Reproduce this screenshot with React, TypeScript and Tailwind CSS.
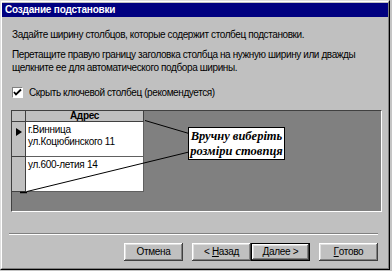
import React from "react";

const btnShadow =
  "shadow-[inset_-1px_-1px_#404040,inset_1px_1px_#ffffff,inset_-2px_-2px_#808080,inset_2px_2px_#dfdfdf]";

function Btn({ children, def }: { children: React.ReactNode; def?: boolean }) {
  const inner = `bg-[#c0c0c0] ${btnShadow} flex items-center justify-center text-[10px] tracking-[-0.3px] leading-none text-black`;
  if (def) {
    return (
      <div className="w-[59px] h-[18px] border border-black">
        <div className={`w-full h-full ${inner}`}>{children}</div>
      </div>
    );
  }
  return <div className={`w-[59px] h-[18px] ${inner}`}>{children}</div>;
}

export default function App() {
  return (
    <div
      className="w-[392px] h-[271px] bg-[#c4c4c4] overflow-hidden"
      style={{ fontFamily: '"Liberation Sans", Arial, sans-serif' }}
    >
      <div className="w-[390px] h-[270px] border border-t-[#dfdfdf] border-l-[#dfdfdf] border-r-[#000000] border-b-[#000000]">
        <div className="w-full h-full border border-t-white border-l-white border-r-[#808080] border-b-[#808080] bg-[#c0c0c0] flex flex-col">
          {/* Title bar */}
          <div className="mt-[1px] h-[14px] bg-[#000080] flex items-center pl-[3px]">
            <span className="text-white font-bold text-[10px] tracking-[-0.2px] leading-none">
              Создание подстановки
            </span>
          </div>

          {/* Texts */}
          <div className="pl-[10px] text-[10px] tracking-[-0.4px] leading-[13px] text-black whitespace-nowrap">
            <div className="mt-[11px]">
              Задайте ширину столбцов, которые содержит столбец подстановки.
            </div>
            <div className="mt-[7px]">
              Перетащите правую границу заголовка столбца на нужную ширину или дважды
            </div>
            <div>щелкните ее для автоматического подбора ширины.</div>
            <div className="mt-[12px] flex items-center gap-[6px]">
              <div className="w-[11px] h-[11px] bg-white border border-t-[#808080] border-l-[#808080] border-r-white border-b-white flex items-center justify-center">
                <svg width="9" height="9" viewBox="0 0 9 9">
                  <path d="M1 4 L3 6.5 L8 1.5" stroke="#000" strokeWidth="1.8" fill="none" />
                </svg>
              </div>
              <span>Скрыть ключевой столбец (рекомендуется)</span>
            </div>
          </div>

          {/* Grid area */}
          <div className="ml-[9px] mt-[11px] w-[371px] h-[102px] relative bg-[#808080] border border-t-[#404040] border-l-[#404040] border-r-white border-b-white">
            <div className="flex">
              {/* selector column */}
              <div className="w-[14px] flex flex-col">
                <div className="h-[11px] bg-[#c0c0c0] border-r border-b border-[#404040]" />
                <div className="h-[35px] bg-[#c0c0c0] border-r border-b border-[#404040] flex items-start justify-center pt-[6px]">
                  <svg width="6" height="8" viewBox="0 0 6 8">
                    <path d="M0 0 L6 4 L0 8 Z" fill="#000" />
                  </svg>
                </div>
                <div className="h-[35px] bg-[#c0c0c0] border-r border-b border-[#404040]" />
              </div>
              {/* data column */}
              <div className="w-[118px] flex flex-col text-[10px] tracking-[-0.3px]">
                <div className="h-[11px] bg-[#c0c0c0] border-r border-b border-[#404040] flex items-center justify-center font-bold leading-none text-black">
                  Адрес
                </div>
                <div className="h-[35px] bg-white border-r border-b border-[#606060] pl-[2px] pt-[2px] leading-[12px] text-black">
                  <div>г.Винница</div>
                  <div>ул.Коцюбинского 11</div>
                </div>
                <div className="h-[35px] bg-white border-r border-b border-[#606060] pl-[2px] pt-[2px] leading-[12px] text-black">
                  ул.600-летия 14
                </div>
              </div>
            </div>

            {/* annotation lines */}
            <svg
              className="absolute left-0 top-0"
              width="370"
              height="100"
              viewBox="0 0 370 100"
            >
              <line x1="133" y1="9.5" x2="177" y2="22.5" stroke="#000" strokeWidth="1" />
              <line x1="177" y1="41" x2="15" y2="80.5" stroke="#000" strokeWidth="1" />
              <path d="M8 81.5 L15 81.5" stroke="#000" strokeWidth="1.5" />
            </svg>

            {/* callout */}
            <div
              className="absolute left-[176px] top-[16px] w-[97px] h-[33px] bg-white border border-black flex flex-col items-center justify-center text-[12.5px] leading-[15px] font-bold italic text-black whitespace-nowrap"
              style={{ fontFamily: '"Liberation Serif", "Times New Roman", serif' }}
            >
              <div>Вручну виберіть</div>
              <div>розміри стовпця</div>
            </div>
          </div>

          {/* separator */}
          <div className="ml-[7px] mt-[21px] w-[369px] border-t border-t-[#808080] border-b border-b-white" />

          {/* buttons */}
          <div className="mt-[8px] flex justify-end pr-[10px]">
            <Btn>Отмена</Btn>
            <div className="ml-[9px]">
              <Btn>
                &lt;&nbsp;<span className="underline">Н</span>азад
              </Btn>
            </div>
            <div>
              <Btn def>
                <span className="underline">Д</span>алее&nbsp;&gt;
              </Btn>
            </div>
            <div className="ml-[9px]">
              <Btn>
                <span className="underline">Г</span>отово
              </Btn>
            </div>
          </div>
        </div>
      </div>
    </div>
  );
}
